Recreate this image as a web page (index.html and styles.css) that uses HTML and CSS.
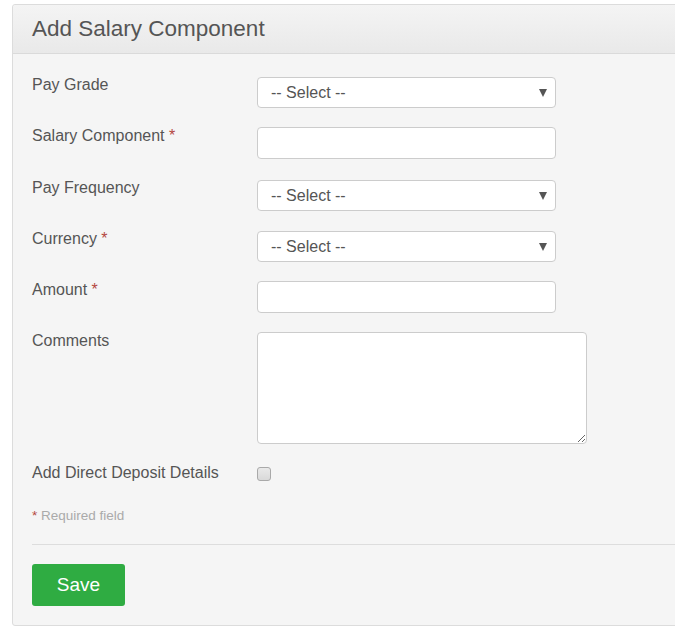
FILE: index.html
```html
<!DOCTYPE html>
<html>
<head>
<meta charset="utf-8">
<link rel="stylesheet" href="styles.css">
</head>
<body>
<div class="page">
<div class="panel">
  <div class="panel-head">
    <h1 class="title">Add Salary Component</h1>
  </div>
  <form class="panel-body">
    <div class="row r1">
      <label class="lbl">Pay Grade</label>
      <div class="select-wrap"><select class="ctl sel"><option>-- Select --</option></select></div>
    </div>
    <div class="row r2">
      <label class="lbl">Salary Component <span class="req">*</span></label>
      <input class="ctl txt" type="text">
    </div>
    <div class="row r3">
      <label class="lbl">Pay Frequency</label>
      <div class="select-wrap"><select class="ctl sel"><option>-- Select --</option></select></div>
    </div>
    <div class="row r4">
      <label class="lbl">Currency <span class="req">*</span></label>
      <div class="select-wrap"><select class="ctl sel"><option>-- Select --</option></select></div>
    </div>
    <div class="row r5">
      <label class="lbl">Amount <span class="req">*</span></label>
      <input class="ctl txt" type="text">
    </div>
    <div class="row r6">
      <label class="lbl">Comments</label>
      <textarea class="ctl area"></textarea>
    </div>
    <div class="row row-check">
      <label class="lbl">Add Direct Deposit Details</label>
      <input class="chk" type="checkbox">
    </div>
    <p class="note"><span class="req">*</span> Required field</p>
    <div class="divider"></div>
    <button class="btn" type="button">Save</button>
  </form>
</div>
</div>
</body>
</html>
```

FILE: styles.css
```css
html, body {
  margin: 0;
  padding: 0;
  background: #fff;
}
body {
  font-family: "Liberation Sans", Arial, sans-serif;
  color: #555;
}
.page {
  width: 100%;
  overflow: hidden;
  padding: 4px 0 3px 12px;
  box-sizing: border-box;
}
.panel {
  width: 700px;
  border: 1px solid #dcdcdc;
  border-radius: 3px;
  background: #f5f5f5;
}
.panel-head {
  height: 48px;
  display: flex;
  align-items: center;
  padding-left: 19px;
  background: linear-gradient(#f4f4f4, #e9e9e9);
  border-bottom: 1px solid #dadada;
  border-radius: 3px 3px 0 0;
}
.title {
  margin: 0;
  font-size: 22.5px;
  font-weight: normal;
  color: #555;
}
.panel-body {
  padding: 23px 0 19px 19px;
}
.row {
  display: flex;
  align-items: flex-start;
  margin-bottom: 20px;
}
.r1 { margin-bottom: 19px; }
.r2 { margin-bottom: 21px; }
.r3 { margin-bottom: 20px; }
.r4 { margin-bottom: 19px; }
.r5 { margin-bottom: 19px; }
.r6 { margin-bottom: 20px; }
.lbl {
  width: 225px;
  flex: none;
  font-size: 16px;
  line-height: 16px;
  color: #555;
}
.r2 .lbl, .r5 .lbl, .r6 .lbl, .row-check .lbl {
  padding-top: 1px;
}
.req {
  color: #b4473f;
}
.ctl {
  box-sizing: border-box;
  border: 1px solid #ccc;
  border-radius: 4px;
  background: #fff;
  font-family: "Liberation Sans", Arial, sans-serif;
  font-size: 16px;
  color: #555;
  margin: 0;
}
.select-wrap {
  position: relative;
  width: 299px;
}
.select-wrap::after {
  content: "";
  position: absolute;
  right: 9px;
  top: 12px;
  border-left: 4px solid transparent;
  border-right: 4px solid transparent;
  border-top: 8px solid #555;
  pointer-events: none;
}
.sel {
  appearance: none;
  -webkit-appearance: none;
  width: 299px;
  height: 31px;
  padding: 0 0 0 13px;
  outline: none;
}
.txt {
  width: 299px;
  height: 32px;
  padding: 0 12px;
}
.area {
  width: 330px;
  height: 112px;
  padding: 6px 12px;
  resize: both;
}
.row-check {
  margin-bottom: 0;
}
.chk {
  appearance: none;
  -webkit-appearance: none;
  width: 14px;
  height: 14px;
  margin: 3px 0 0 0;
  border: 1px solid #a9a9a9;
  border-radius: 3px;
  background: linear-gradient(#e9e9e9, #d9d9d9);
  box-sizing: border-box;
}
.note {
  margin: 27px 0 0 0;
  font-size: 13.5px;
  line-height: 16px;
  color: #aaa;
}
.divider {
  height: 0;
  border-top: 1px solid #ddd;
  margin-top: 20px;
}
.btn {
  margin-top: 19px;
  width: 93px;
  height: 42px;
  border: none;
  border-radius: 3px;
  background: #2fac42;
  color: #fff;
  font-family: "Liberation Sans", Arial, sans-serif;
  font-size: 19px;
  display: block;
  padding: 0;
}
```
